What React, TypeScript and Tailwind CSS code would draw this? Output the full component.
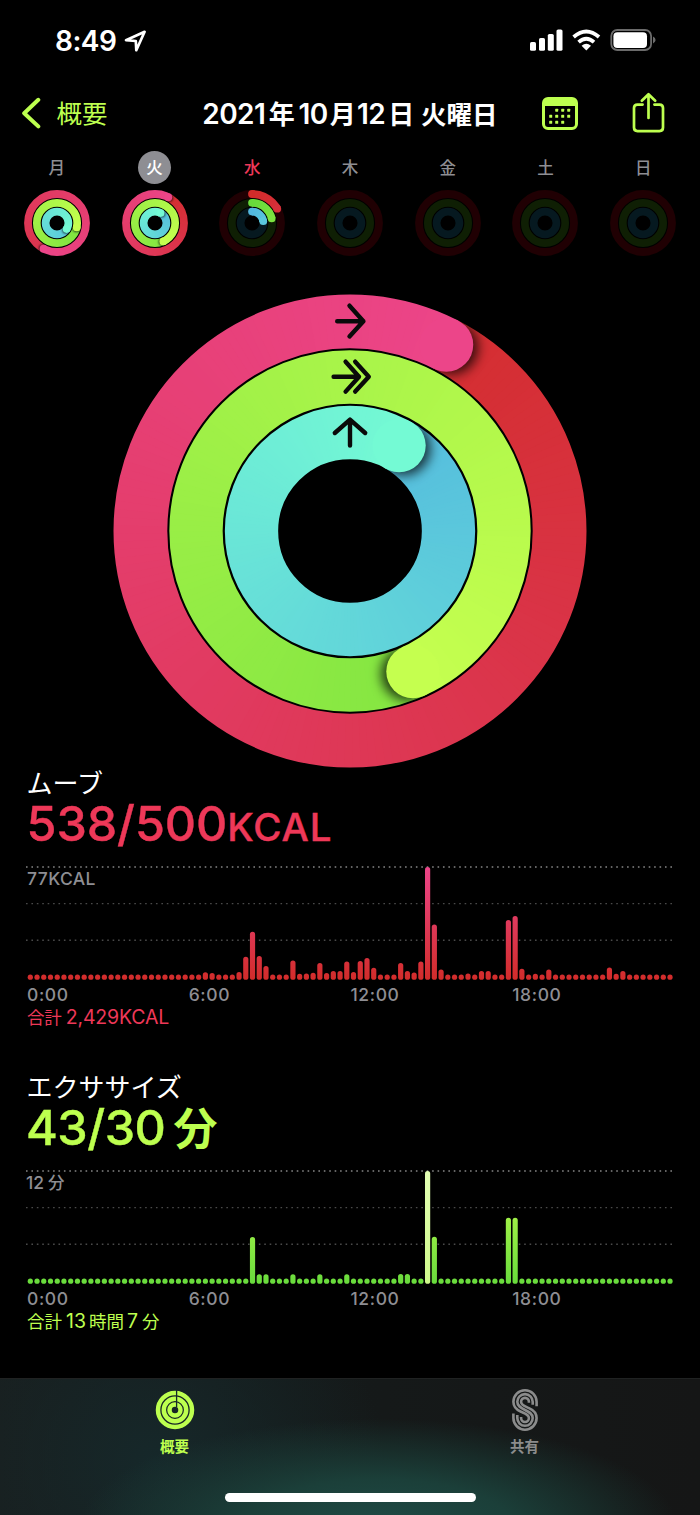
/**
 * Activity day summary
 * ─────────────────────────────────────────────────────────────────────────────
 * Week strip, large activity rings and the move / exercise charts
 */
import { useId } from 'react'
import clsx from 'clsx'

type RGB = [number, number, number]

type RingStyle = { from: RGB; to: RGB; track: string }

const MOVE: RingStyle = { from: [210, 44, 42], to: [236, 69, 137], track: '#200003' }
const EXERCISE: RingStyle = { from: [104, 219, 60], to: [197, 255, 79], track: '#0f1f04' }
const STAND: RingStyle = { from: [83, 184, 222], to: [116, 250, 212], track: '#061920' }

const week = [
  { day: '月', rings: [1.577, 1.285, 1.34] },
  { day: '火', rings: [1.076, 1.433, 1.083], selected: true },
  { day: '水', rings: [0.168, 0.214, 0.225], today: true },
  { day: '木', rings: [0, 0, 0] },
  { day: '金', rings: [0, 0, 0] },
  { day: '土', rings: [0, 0, 0] },
  { day: '日', rings: [0, 0, 0] },
]

// Bar heights by quarter-hour slot; every slot not listed is an empty dot
const moveBars: Record<number, number> = {
  26: 7.5, 27: 6.7, 31: 7.7, 32: 23, 33: 48, 34: 23.7, 35: 13.7, 39: 19.3, 40: 6, 41: 6.3,
  42: 7, 43: 16.7, 44: 6.7, 45: 8.7, 46: 8.7, 47: 18.3, 48: 7.7, 49: 18.7, 50: 21.7, 51: 12,
  55: 16.7, 56: 8.7, 57: 7.3, 58: 18.3, 59: 112.7, 60: 55.3, 61: 10.3, 65: 6.3, 67: 8.7,
  68: 8.7, 71: 59.7, 72: 63.7, 73: 11, 75: 6, 77: 10.3, 86: 12.3, 87: 6, 88: 8.7,
}

const exerciseBars: Record<number, number> = {
  33: 46.7, 34: 9.5, 35: 9.5, 39: 9.5, 43: 9.5, 47: 9.5, 55: 9.8, 56: 9.8, 59: 112.7,
  60: 47, 71: 66, 72: 66,
}

const point = (r: number, deg: number) => {
  const a = (deg * Math.PI) / 180
  return { x: r * Math.sin(a), y: -r * Math.cos(a) }
}

const mix = (style: RingStyle, t: number) =>
  `rgb(${style.from.map((c, i) => Math.round(c + (style.to[i] - c) * t)).join(',')})`

function Ring({ r, width, progress, style }: { r: number; width: number; progress: number; style: RingStyle }) {
  const id = useId().replace(/[^a-zA-Z0-9]/g, '')
  if (progress <= 0) return <circle r={r} fill="none" stroke={style.track} strokeWidth={width} />

  const end = progress * 360
  const start = Math.max(0, end - 360)
  const span = Math.max(360, end)
  const split = Math.max(start, end - 60)
  const box = r + width

  // Overlapping slices, a little wider than the ring; the mask gives the clean edge
  const arcs = (a: number, b: number) => {
    const out = []
    for (let d = a; d < b; d += 2) {
      const p = point(r, d)
      const q = point(r, Math.min(d + 8, b))
      out.push(
        <path
          key={d}
          d={`M${p.x} ${p.y}A${r} ${r} 0 0 1 ${q.x} ${q.y}`}
          fill="none"
          stroke={mix(style, (d + 1) / span)}
          strokeWidth={width + 2}
        />
      )
    }
    return out
  }

  const head = point(r, end)
  const shade = point(r, end + (width / r) * 6)

  return (
    <g>
      <mask id={`m${id}`} maskUnits="userSpaceOnUse" x={-box} y={-box} width={box * 2} height={box * 2}>
        <circle r={r} fill="none" stroke="#fff" strokeWidth={width} />
      </mask>
      <filter id={`f${id}`} x="-50%" y="-50%" width="200%" height="200%">
        <feGaussianBlur stdDeviation={width * 0.11} />
      </filter>
      {progress < 1 && <circle r={r} fill="none" stroke={style.track} strokeWidth={width} />}
      {progress < 1 && <circle cx={0} cy={-r} r={width / 2} fill={mix(style, 0)} />}
      <g mask={`url(#m${id})`}>
        {arcs(start, Math.min(split + 4, end))}
        {progress > 1 && (
          <circle cx={shade.x} cy={shade.y} r={width / 2} fill="#000" fillOpacity={0.75} filter={`url(#f${id})`} />
        )}
        {arcs(split, end)}
      </g>
      <circle cx={head.x} cy={head.y} r={width / 2} fill={mix(style, end / span)} />
    </g>
  )
}

function MiniRings({ rings }: { rings: number[] }) {
  return (
    <svg width="68" height="68" viewBox="-34 -34 68 68">
      <Ring r={29} width={7.8} progress={rings[0]} style={MOVE} />
      <Ring r={20.2} width={7.7} progress={rings[1]} style={EXERCISE} />
      <Ring r={11.4} width={7.7} progress={rings[2]} style={STAND} />
    </svg>
  )
}

function StatusBar() {
  return (
    <div className="flex h-20 items-center justify-between pl-[55px] pr-[44px]">
      <div className="flex items-center gap-[7.5px]">
        <span className="mt-0.5 text-[28px] leading-8 font-semibold tracking-[-0.5px]">8:49</span>
        <svg width="24" height="24" viewBox="0 0 24 24" fill="none" stroke="#fff" strokeWidth="2.7" strokeLinejoin="round">
          <path d="M2 12.2 20.6 3.8 12.3 22.2 11.8 13Z" />
        </svg>
      </div>
      <svg width="126" height="24" viewBox="530 28 126 24">
        <g fill="#fff">
          <rect x="530" y="42" width="6" height="8.8" rx="1.6" />
          <rect x="539" y="38" width="6" height="12.8" rx="1.6" />
          <rect x="547.8" y="34" width="6" height="16.8" rx="1.6" />
          <rect x="556.5" y="29.4" width="6" height="21.4" rx="1.6" />
          <path d="M586.3 50.4 581.6 45.8Q586.3 41.8 591 45.8Z" />
        </g>
        <g fill="none" stroke="#fff" strokeWidth="3.8">
          <path d="M573.6 37Q586.3 26 599 37" />
          <path d="M578.6 42.2Q586.3 35.4 594 42.2" />
        </g>
        <rect x="611.3" y="30" width="39.8" height="20" rx="6" fill="none" stroke="#6b6b6b" strokeWidth="1.8" />
        <rect x="613.4" y="32.2" width="33.6" height="15.7" rx="4" fill="#fff" />
        <path d="M653 36.6Q655.6 38 655.6 40T653 43.4Z" fill="#6b6b6b" />
      </svg>
    </div>
  )
}

function NavBar() {
  const dots = [
    [14.7, 13.2], [20.7, 13.2], [26.7, 13.2],
    [8.7, 19.3], [14.7, 19.3], [20.7, 19.3], [26.7, 19.3],
    [8.7, 25.3], [14.7, 25.3], [20.7, 25.3],
  ]
  return (
    <div className="grid h-[66px] grid-cols-[1fr_auto_1fr] items-center">
      <div className="flex items-center gap-[14.5px] pl-[21px] text-[#bdff4f]">
        <svg width="21" height="32" viewBox="0 0 21 32" fill="none" stroke="currentColor" strokeWidth="4" strokeLinecap="round" strokeLinejoin="round">
          <path d="M17.3 2.8 3.2 16.2 17.3 29.4" />
        </svg>
        <span className="mt-0.5 text-[25.5px] leading-8">概要</span>
      </div>
      <h1 className="mt-0.5 flex items-baseline text-[28px] leading-8 font-semibold tracking-[-0.6px]">
        <span>2021</span>
        <span className="ml-[3.5px] text-[26px] font-bold">年</span>
        <span className="ml-[4.5px]">10</span>
        <span className="ml-0.5 text-[26px] font-bold">月</span>
        <span className="ml-0.5">12</span>
        <span className="ml-[3px] text-[26px] font-bold">日</span>
        <span className="ml-[7.5px] text-[25.5px] font-bold tracking-normal">火曜日</span>
      </h1>
      <div className="flex items-center justify-end gap-[54px] pr-[35px]">
        <svg width="36" height="33" viewBox="0 0 36 33">
          <rect x="1.5" y="1.5" width="33" height="30" rx="4.5" fill="none" stroke="#bdff4f" strokeWidth="3" />
          <path d="M2 9V4Q2 1 5 1H31Q34 1 34 4V9Z" fill="#bdff4f" />
          {dots.map(([x, y]) => (
            <rect key={`${x}-${y}`} x={x - 1.5} y={y - 1.5} width="3" height="3" rx="0.6" fill="#bdff4f" />
          ))}
        </svg>
        <svg className="-mt-0.5" width="33" height="41" viewBox="0 0 33 41" fill="none" stroke="#bdff4f" strokeWidth="2.7" strokeLinecap="round" strokeLinejoin="round">
          <path d="M10.6 12.6H5.5Q2 12.6 2 16.1V35.6Q2 39.1 5.5 39.1H27.5Q31 39.1 31 35.6V16.1Q31 12.6 27.5 12.6H22.4" />
          <path d="M16.5 26V2.5M9.8 8.8 16.5 2.2 23.2 8.8" />
        </svg>
      </div>
    </div>
  )
}

function WeekStrip() {
  return (
    <div className="grid grid-cols-7 px-2 pt-[5px]">
      {week.map((d) => (
        <div key={d.day} className="flex flex-col items-center gap-[5px]">
          <span
            className={clsx(
              'flex h-[33px] w-[33px] items-center justify-center rounded-full pt-px text-[16.5px] font-medium',
              d.selected ? 'bg-[#8e8e93] font-bold text-white' : d.today ? 'font-bold text-[#ee3858]' : 'text-[#8e8e93]'
            )}
          >
            {d.day}
          </span>
          <MiniRings rings={d.rings} />
        </div>
      ))}
    </div>
  )
}

function BigRings() {
  return (
    <svg className="mx-auto mt-[34px] block" width="480" height="480" viewBox="-240 -240 480 480">
      <Ring r={209.6} width={53.8} progress={1.076} style={MOVE} />
      <Ring r={154} width={53.3} progress={1.433} style={EXERCISE} />
      <Ring r={98.5} width={53.3} progress={1.083} style={STAND} />
      <g fill="none" stroke="#0a0a0a" strokeWidth="4.4" strokeLinecap="round" strokeLinejoin="round">
        <path d="M-12.8-209.8H13.4M-.5-225.3 13.4-209.8-.5-194.6" />
        <path d="M-16.4-154.3H9M-4.4-169.3 9-154.3-4.4-139.4M5.2-169.3 18.8-154.3 5.2-139.4" />
        <path d="M0-85.5V-111M-15.2-98 0-111.4 15.2-98" />
      </g>
    </svg>
  )
}

function DayChart({ bars, from, to, highlight }: { bars: Record<number, number>; from: string; to: string; highlight?: boolean }) {
  const id = useId().replace(/[^a-zA-Z0-9]/g, '')
  return (
    <svg className="block" width="648" height="116" viewBox="0 0 648 116">
      <linearGradient id={`g${id}`} gradientUnits="userSpaceOnUse" x1="0" y1="114" x2="0" y2="1">
        <stop offset="0" stopColor={from} />
        <stop offset="1" stopColor={to} />
      </linearGradient>
      <linearGradient id={`h${id}`} gradientUnits="userSpaceOnUse" x1="0" y1="114" x2="0" y2="1">
        <stop offset="0" stopColor="#cff98a" />
        <stop offset="1" stopColor="#e3ffb4" />
      </linearGradient>
      {[1, 37.6, 74.2].map((y, i) => (
        <line key={y} x1="0" x2="648" y1={y} y2={y} stroke={i ? '#4a4a4a' : '#858585'} strokeWidth="1.4" strokeDasharray="1.6 3.815" />
      ))}
      {Array.from({ length: 96 }, (_, i) => {
        const h = bars[i] ?? 5.2
        return (
          <rect
            key={i}
            x={1.7 + i * 6.734}
            y={113.8 - h}
            width="5.2"
            height={h}
            rx="2.6"
            fill={highlight && i === 59 ? `url(#h${id})` : `url(#g${id})`}
          />
        )
      })}
    </svg>
  )
}

function TimeAxis() {
  return (
    <div className="mt-[3px] grid w-[648px] grid-cols-4 pl-px text-[17.5px] leading-5 font-medium tracking-[0.6px] text-[#8e8e93]">
      {['0:00', '6:00', '12:00', '18:00'].map((t) => (
        <span key={t}>{t}</span>
      ))}
    </div>
  )
}

function TabBar() {
  return (
    <nav className="relative grid h-[137px] grid-cols-[349px_351px] overflow-hidden border-t border-[#202222] bg-[#131414] bg-[radial-gradient(ellipse_300px_110px_at_54%_110%,#1f4b46_0%,#1b3f39_45%,transparent_100%),radial-gradient(ellipse_230px_200px_at_22%_60%,#16282a_0%,transparent_100%),linear-gradient(90deg,#191e1e,#151a1a_40%,#151616)]">
      <div className="flex flex-col items-center pt-[11px] text-[#bdff4f]">
        <svg width="40" height="40" viewBox="-20 -20 40 40" fill="none" stroke="currentColor" strokeWidth="4.5">
          <circle r="17" />
          <circle r="11.2" />
          <circle r="5.5" />
          <path d="M1.6-20V-13.7M1.6-14V-8M1.6-8V-3" stroke="#14282a" strokeWidth="1.3" />
        </svg>
        <span className="mt-[7px] text-[14.5px] leading-5 font-bold">概要</span>
      </div>
      <div className="flex flex-col items-center pt-[9px] text-[#8b8c8c]">
        <svg width="28" height="44" viewBox="510.5 1388.2 28 44" fill="none" stroke="currentColor" strokeWidth="2.6">
          <path d="M536.1 1406.5V1402A11.6 11.6 0 0 0 512.9 1402C512.9 1408 517 1410.5 520.5 1412S528.4 1414.5 528.4 1418.3A3.9 3.9 0 0 1 520.6 1418.3V1417.3" />
          <path d="M532.2 1405V1402A7.7 7.7 0 0 0 516.8 1402C516.8 1406.5 520.5 1408.3 524.5 1410.15S532.2 1413.8 532.2 1418.3A7.7 7.7 0 0 1 516.8 1418.3V1415.3" />
          <path d="M528.4 1403V1402A3.9 3.9 0 0 0 520.6 1402C520.6 1405.8 525 1406.8 528.5 1408.3S536.1 1412.3 536.1 1418.3A11.6 11.6 0 0 1 512.9 1418.3V1413.8" />
        </svg>
        <span className="mt-[5px] text-[14.5px] leading-5 font-bold">共有</span>
      </div>
      {/* Home indicator */}
      <div className="absolute bottom-[13px] left-[225px] h-[9px] w-[251px] rounded-full bg-white" />
    </nav>
  )
}

export default function App() {
  return (
    <div className="flex h-[1515px] w-[700px] flex-col overflow-hidden bg-black font-['Inter','Noto_Sans_CJK_JP',sans-serif] text-white">
      <StatusBar />
      <NavBar />
      <WeekStrip />
      <BigRings />

      <section className="h-[304px] pl-[26px]">
        <h2 className="pl-[0.5px] text-[26px] leading-[26px]">ムーブ</h2>
        <p className="mt-0.5 flex h-[50px] items-baseline pl-[0.5px] text-[48.5px] leading-[50px] font-medium text-[#ee3858] [-webkit-text-stroke:0.4px]">
          <span className="tracking-[-0.1px]">538/500</span>
          <span className="text-[38.5px] tracking-[0.9px]">KCAL</span>
        </p>
        <div className="relative mt-[17px]">
          <DayChart bars={moveBars} from="#d22c2a" to="#ec4589" />
          <span className="absolute top-[3px] left-px text-[17.5px] leading-5 font-medium tracking-[0.4px] text-[#8e8e93]">77KCAL</span>
        </div>
        <TimeAxis />
        <p className="flex items-baseline pl-px text-[19.5px] leading-6 tracking-[-0.15px] text-[#ee3858]">
          <span className="text-[17.5px]">合計</span>
          <span className="ml-1">2,429KCAL</span>
        </p>
      </section>

      <section className="flex-1 pl-[26px]">
        <h2 className="pl-[0.5px] text-[26px] leading-[26px]">エクササイズ</h2>
        <p className="mt-0.5 flex h-[50px] items-baseline text-[48.5px] leading-[50px] font-medium text-[#bdff4f] [-webkit-text-stroke:0.4px]">
          <span className="tracking-[-0.5px]">43/30</span>
          <span className="ml-2 text-[44px] leading-[50px] font-bold [-webkit-text-stroke:0px]">分</span>
        </p>
        <div className="relative mt-[17px]">
          <DayChart bars={exerciseBars} from="#68db3c" to="#c5ff4f" highlight />
          <span className="absolute top-[3px] left-0 flex items-baseline text-[17.5px] leading-5 font-medium text-[#8e8e93]">
            12<span className="ml-1 text-[16.5px]">分</span>
          </span>
        </div>
        <TimeAxis />
        <p className="flex items-baseline pl-px text-[19.5px] leading-6 text-[#bdff4f]">
          <span className="text-[17.5px]">合計</span>
          <span className="ml-1">13</span>
          <span className="ml-[3px] text-[17.5px]">時間</span>
          <span className="ml-[3px]">7</span>
          <span className="ml-1 text-[17.5px]">分</span>
        </p>
      </section>

      <TabBar />
    </div>
  )
}
